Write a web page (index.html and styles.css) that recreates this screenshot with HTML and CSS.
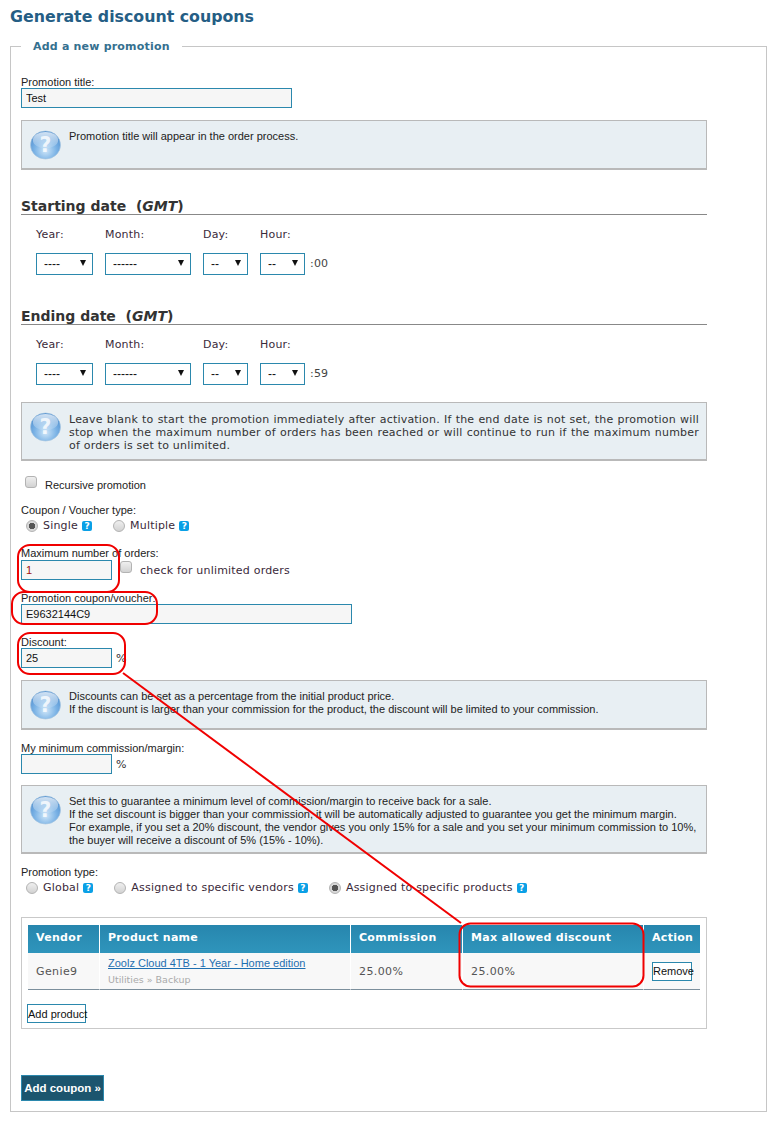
FILE: index.html
```html
<!DOCTYPE html>
<html lang="en">
<head>
    <meta charset="UTF-8">
    <title>Generate discount coupons</title>
    <link rel="stylesheet" href="styles.css">
</head>
<body>
    <h1>Generate discount coupons</h1>

    <svg width="0" height="0" class="defs">
        <defs>
            <radialGradient id="ball" cx="50%" cy="70%" r="65%">
                <stop offset="0" stop-color="#cfe6f8"/>
                <stop offset="0.55" stop-color="#7db4e6"/>
                <stop offset="1" stop-color="#4f8fd0"/>
            </radialGradient>
            <linearGradient id="shine" x1="0" y1="0" x2="0" y2="1">
                <stop offset="0" stop-color="#fff" stop-opacity="0.75"/>
                <stop offset="1" stop-color="#fff" stop-opacity="0.1"/>
            </linearGradient>
            <symbol id="help" viewBox="0 0 32 30">
                <ellipse cx="16" cy="15" rx="15.5" ry="14.5" fill="url(#ball)" stroke="#a9c6de" stroke-width="0.6"/>
                <ellipse cx="16" cy="10" rx="13" ry="8.5" fill="url(#shine)"/>
                <text x="16" y="22" text-anchor="middle" class="help-mark">?</text>
            </symbol>
        </defs>
    </svg>

    <fieldset class="panel">
        <legend>Add a new promotion</legend>

        <label class="lbl first">Promotion title:</label>
        <input type="text" class="txt wide" value="Test">

        <div class="note h50">
            <svg class="note-ic"><use href="#help"/></svg>
            <p>Promotion title will appear in the order process.</p>
        </div>

        <h2 class="date-head start">Starting date &nbsp;(<em>GMT</em>)</h2>
        <div class="date-grid">
            <span class="d-year">Year:</span><span class="d-month">Month:</span><span class="d-day">Day:</span><span class="d-hour">Hour:</span>
        </div>
        <div class="date-sel">
            <div class="sel d-year"><select><option>----</option></select></div>
            <div class="sel d-month"><select><option>------</option></select></div>
            <div class="sel d-day"><select><option>--</option></select></div>
            <div class="sel d-hour"><select><option>--</option></select></div>
            <span class="mins">:00</span>
        </div>

        <h2 class="date-head end">Ending date &nbsp;(<em>GMT</em>)</h2>
        <div class="date-grid">
            <span class="d-year">Year:</span><span class="d-month">Month:</span><span class="d-day">Day:</span><span class="d-hour">Hour:</span>
        </div>
        <div class="date-sel">
            <div class="sel d-year"><select><option>----</option></select></div>
            <div class="sel d-month"><select><option>------</option></select></div>
            <div class="sel d-day"><select><option>--</option></select></div>
            <div class="sel d-hour"><select><option>--</option></select></div>
            <span class="mins">:59</span>
        </div>

        <div class="note h59 verd">
            <svg class="note-ic"><use href="#help"/></svg>
            <p>Leave blank to start the promotion immediately after activation. If the end date is not set, the promotion will stop when the maximum number of orders has been reached or will continue to run if the maximum number of orders is set to unlimited.</p>
        </div>

        <div class="recursive">
            <input type="checkbox" class="chk">
            <span>Recursive promotion</span>
        </div>

        <label class="lbl voucher-type">Coupon / Voucher type:</label>
        <div class="radios">
            <input type="radio" class="rad" name="t" checked><span>Single</span><i class="q">?</i>
            <input type="radio" class="rad gap" name="t"><span>Multiple</span><i class="q">?</i>
        </div>

        <label class="lbl max-orders">Maximum number of orders:</label>
        <div class="inline">
            <input type="text" class="txt small red" value="1">
            <input type="checkbox" class="chk chk-up">
            <span class="verd-text">check for unlimited orders</span>
        </div>

        <label class="lbl code">Promotion coupon/voucher:</label>
        <input type="text" class="txt code-in" value="E9632144C9">

        <label class="lbl code">Discount:</label>
        <div class="inline">
            <input type="text" class="txt small" value="25"><span class="pct">%</span>
        </div>

        <div class="note h50 after-disc">
            <svg class="note-ic"><use href="#help"/></svg>
            <p>Discounts can be set as a percentage from the initial product price.<br>If the discount is larger than your commission for the product, the discount will be limited to your commission.</p>
        </div>

        <label class="lbl my-min">My minimum commission/margin:</label>
        <div class="inline">
            <input type="text" class="txt small" value=""><span class="pct">%</span>
        </div>

        <div class="note h69 after-min">
            <svg class="note-ic"><use href="#help"/></svg>
            <p>Set this to guarantee a minimum level of commission/margin to receive back for a sale.<br>If the set discount is bigger than your commission, it will be automatically adjusted to guarantee you get the minimum margin.<br>For example, if you set a 20% discount, the vendor gives you only 15% for a sale and you set your minimum commission to 10%, the buyer will receive a discount of 5% (15% - 10%).</p>
        </div>

        <label class="lbl promo-type">Promotion type:</label>
        <div class="radios">
            <input type="radio" class="rad" name="p"><span>Global</span><i class="q">?</i>
            <input type="radio" class="rad gap" name="p"><span>Assigned to specific vendors</span><i class="q">?</i>
            <input type="radio" class="rad gap" name="p" checked><span>Assigned to specific products</span><i class="q">?</i>
        </div>

        <div class="products">
            <table>
                <thead>
                    <tr>
                        <th class="c1">Vendor</th>
                        <th class="c2">Product name</th>
                        <th class="c3">Commission</th>
                        <th class="c4">Max allowed discount</th>
                        <th class="c5">Action</th>
                    </tr>
                </thead>
                <tbody>
                    <tr>
                        <td>Genie9</td>
                        <td><a href="#">Zoolz Cloud 4TB - 1 Year - Home edition</a><small>Utilities » Backup</small></td>
                        <td>25.00%</td>
                        <td>25.00%</td>
                        <td><button class="mini">Remove</button></td>
                    </tr>
                </tbody>
            </table>
            <button class="mini add-prod">Add product</button>
        </div>

        <button class="submit">Add coupon »</button>
    </fieldset>

    <svg class="marks" width="782" height="1124">
        <rect x="18" y="545" width="101" height="47" rx="12"/>
        <rect x="12" y="592" width="145" height="32" rx="12"/>
        <rect x="18" y="633" width="107" height="41" rx="12"/>
        <rect x="459.500" y="923.500" width="184" height="63" rx="11"/>
        <path d="M123 673 L461 923"/>
    </svg>
</body>
</html>
```

FILE: styles.css
```css
* {
    box-sizing: border-box;
}
body {
    margin: 0;
    height: 1124px;
    position: relative;
    overflow: hidden;
    background: #fff;
    color: #222;
    font-family: "Liberation Sans", Arial, sans-serif;
    font-size: 11px;
}
.defs {
    position: absolute;
}
.help-mark {
    font: bold 21px "DejaVu Sans", sans-serif;
    fill: #fff;
    fill-opacity: 0.8;
}

h1 {
    margin: 0;
    padding: 6px 0 0 10px;
    height: 39px;
    font: bold 15.800px/21px "DejaVu Sans", Verdana, sans-serif;
    color: #255e85;
}

.panel {
    margin: 0 0 0 10px;
    padding: 0 10px;
    width: 757px;
    height: 1073px;
    border: 1px solid #c6c6c6;
    min-width: 0;
}
.panel legend {
    padding: 0 12px;
    margin: 0;
    height: 14px;
    font: bold 11px/16px "DejaVu Sans", Verdana, sans-serif;
    letter-spacing: 0.2px;
    color: #35708f;
}

.lbl {
    display: block;
    height: 13px;
    line-height: 15px;
    color: #222;
}
.lbl.first { margin-top: 22px; }
.lbl.voucher-type { margin-top: 10px; }
.lbl.max-orders { margin: 12px 0 1px; }
.lbl.code { margin-top: 11px; }
.lbl.my-min { margin-top: 11px; }
.lbl.promo-type { margin: 11px 0 1px; }

.txt {
    display: block;
    height: 20px;
    padding: 0 4px;
    border: 1px solid #2b88ad;
    background: #f6f6f6;
    font: 11px "Liberation Sans", Arial, sans-serif;
    color: #111;
    outline: none;
}
.wide { width: 271px; }
.small { width: 91px; }
.code-in { width: 331px; }
.red { color: #a01010; }
.pct {
    margin-left: 4px;
    font: 11px "DejaVu Sans", Verdana, sans-serif;
    color: #333;
}

.note {
    display: flex;
    margin-top: 12px;
    width: 686px;
    padding: 9px 7px 0 8px;
    border: 1px solid #b9b9b9;
    border-bottom-width: 2px;
    background: #e8eff3;
    font-size: 11px;
    line-height: 13px;
    color: #222;
}
.note p {
    margin: 0;
    flex: 1;
}
.note-ic {
    flex: none;
    width: 31px;
    height: 30px;
    margin-right: 8px;
}
.h50 { height: 50px; }
.h59 { height: 59px; margin-top: 17px; }
.h69 { height: 69px; }
.verd p {
    margin-top: 1px;
    font: 11px/13px "DejaVu Sans", Verdana, sans-serif;
    letter-spacing: 0.2px;
    text-align: justify;
    color: #333;
}
.after-disc { margin-top: 12px; }
.after-min { margin-top: 11px; }

.date-head {
    margin: 0;
    height: 19px;
    border-bottom: 1px solid #888;
    font: bold 14px/21px "DejaVu Sans", Verdana, sans-serif;
    color: #333;
    width: 686px;
}
.date-head em {
    font-style: italic;
}
.date-head.start { margin-top: 26px; }
.date-head.end { margin-top: 31px; }

.date-grid, .date-sel {
    display: flex;
    padding-left: 15px;
    font: 11px/14px "DejaVu Sans", Verdana, sans-serif;
    color: #3a2a3a;
    letter-spacing: 0.2px;
}
.date-grid { margin-top: 13px; }
.date-sel {
    margin-top: 11px;
    align-items: center;
}
.date-grid span { display: block; }
.d-year { width: 57px; margin-right: 12px; }
.d-month { width: 86px; margin-right: 12px; }
.d-day { width: 45px; margin-right: 12px; }
.d-hour { width: 45px; margin-right: 5px; }
.mins { color: #444; }

.sel {
    position: relative;
    height: 22px;
    flex: none;
}
.sel select {
    appearance: none;
    width: 100%;
    height: 22px;
    padding: 0 0 0 7px;
    border: 1px solid #2b88ad;
    border-radius: 0;
    background: #fff;
    font: 12px "Liberation Sans", Arial, sans-serif;
    color: #111;
}
.sel::after {
    content: "";
    position: absolute;
    right: 7px;
    top: 7px;
    border-left: 3px solid transparent;
    border-right: 3px solid transparent;
    border-top: 6px solid #111;
}

.chk, .rad {
    appearance: none;
    margin: 0;
    flex: none;
    border: 1px solid #b3b3b3;
    background: linear-gradient(#efefef, #d2d2d2);
}
.chk {
    width: 12px;
    height: 12px;
    border-radius: 3px;
}
.rad {
    width: 12px;
    height: 12px;
    border-radius: 50%;
}
.rad:checked {
    background: radial-gradient(circle, #555 0, #555 3px, #d8d8d8 3.5px);
}

.recursive {
    display: flex;
    margin-top: 15px;
    padding-left: 4px;
    height: 17px;
}
.recursive span {
    margin-left: 8px;
    padding-top: 3px;
    color: #222;
}

.radios {
    display: flex;
    align-items: center;
    height: 17px;
    margin-top: 1px;
    padding-left: 5px;
    font: 11px/14px "DejaVu Sans", Verdana, sans-serif;
    letter-spacing: 0.2px;
    color: #3a2a3a;
}
.radios span { margin-left: 5px; }
.rad.gap { margin-left: 21px; }
.q {
    width: 10px;
    height: 10px;
    margin-left: 4px;
    border-radius: 2px;
    background: #0aa0e6;
    color: #fff;
    font: bold 9px/10px "DejaVu Sans", sans-serif;
    text-align: center;
    letter-spacing: 0;
}

.inline {
    display: flex;
    align-items: center;
    height: 20px;
}
.chk-up {
    margin: -7px 0 0 8px;
}
.verd-text {
    margin-left: 8px;
    padding-top: 2px;
    font: 11px/14px "DejaVu Sans", Verdana, sans-serif;
    letter-spacing: 0.2px;
    color: #3a2a3a;
}

.products {
    margin-top: 21px;
    width: 686px;
    height: 112px;
    padding: 7px 6px 0;
    border: 1px solid #c9c9c9;
}
.products table {
    width: 672px;
    border-collapse: separate;
    border-spacing: 0;
    table-layout: fixed;
}
.products th {
    height: 28px;
    padding: 0 8px 3px;
    background: linear-gradient(#2786ae, #2f95bc);
    border-right: 1px solid #fff;
    color: #fff;
    text-align: left;
    font: bold 11px "DejaVu Sans", Verdana, sans-serif;
    letter-spacing: 0.3px;
}
.products th:last-child,
.products td:last-child { border-right: 0; }
.products td {
    height: 37px;
    padding: 0 8px;
    background: #f8f8f8;
    border-right: 1px solid #fff;
    border-bottom: 1px solid #7c8f9c;
    font: 11px "DejaVu Sans", Verdana, sans-serif;
    letter-spacing: 0.4px;
    color: #555;
}
.products a {
    display: block;
    font: 11px/14px "Liberation Sans", Arial, sans-serif;
    letter-spacing: 0;
    color: #1f6fb0;
}
.products small {
    display: block;
    margin-top: 4px;
    font: 9.5px/12px "DejaVu Sans", Verdana, sans-serif;
    letter-spacing: 0;
    color: #aaa;
}
.c1 { width: 72px; }
.c2 { width: 251px; }
.c3 { width: 112px; }
.c4 { width: 181px; }
.c5 { width: 56px; }

.mini {
    height: 19px;
    padding: 0;
    border: 1px solid #2b88ad;
    background: #fff;
    font: 11px "Liberation Sans", Arial, sans-serif;
    color: #111;
    white-space: nowrap;
}
td .mini { width: 40px; }
.add-prod {
    display: block;
    width: 59px;
    margin: 14px 0 0 -1px;
}

.submit {
    display: block;
    margin-top: 46px;
    width: 83px;
    height: 26px;
    padding: 0;
    border: 1px solid #2b88ad;
    background: #1c556e;
    color: #fff;
    font: bold 11.5px "Liberation Sans", Arial, sans-serif;
}

.marks {
    position: absolute;
    left: 0;
    top: 0;
    pointer-events: none;
}
.marks rect, .marks path {
    fill: none;
    stroke: #f00000;
    stroke-width: 2;
}
```
